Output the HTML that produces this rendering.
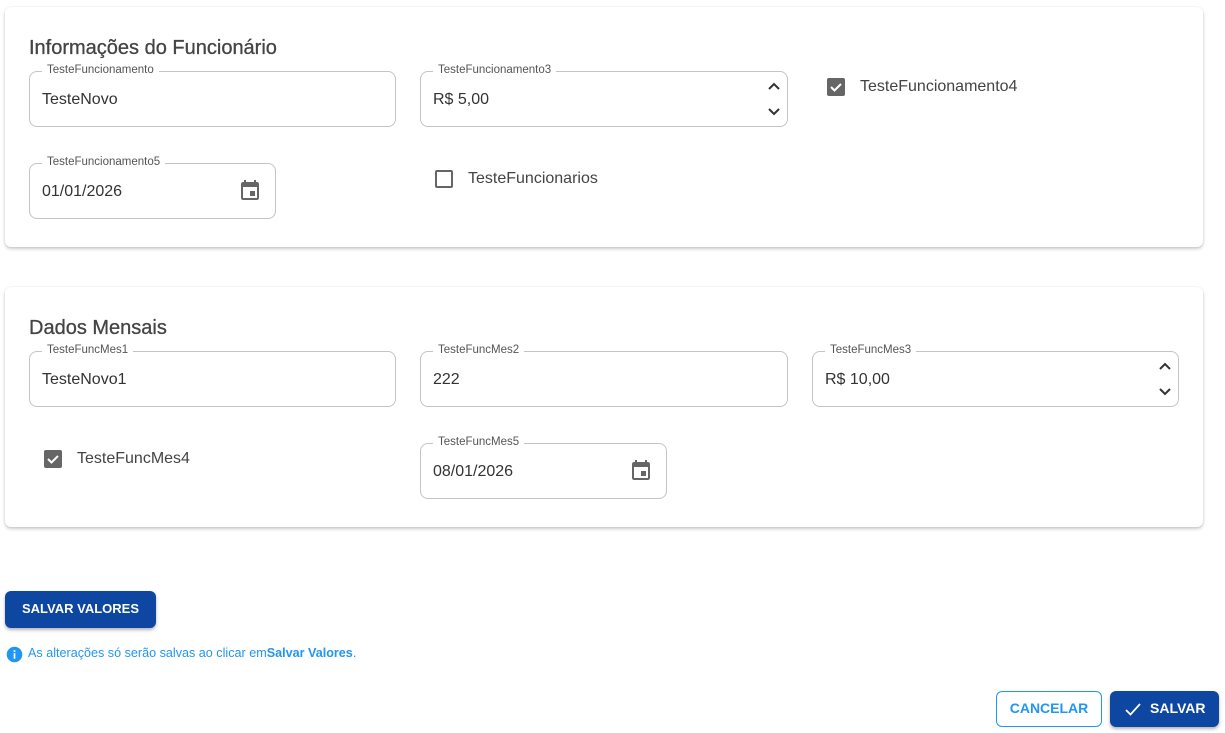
<!DOCTYPE html>
<html><head><meta charset="utf-8"><style>
*{box-sizing:border-box;margin:0;padding:0}
body{width:1225px;height:733px;background:#fff;font-family:"Liberation Sans",sans-serif;position:relative;overflow:hidden;color:#333}
.card{position:absolute;left:5px;width:1198px;height:240px;background:#fff;border-radius:6px;box-shadow:0 2px 3px rgba(0,0,0,.2),0 0 2px rgba(0,0,0,.08)}
.t{position:absolute;left:24px;font-size:20px;color:#444;-webkit-text-stroke:0.3px #444}
.f{position:absolute;height:56px;border:1px solid #c4c4c4;border-radius:8px}
.f .l{position:absolute;top:-8px;left:12px;background:#fff;padding:0 5px;font-size:11.5px;color:#555}
.f .v{position:absolute;left:12px;top:19px;font-size:16px;color:#333}
.cb{position:absolute;width:18px;height:18px;border-radius:2px}
.cb.on{background:#666}
.cb.off{border:2px solid #666}
.cl{position:absolute;font-size:16px;color:#444}
.cal{position:absolute;right:13px;top:15px}
</style></head><body>
<div class="card" style="top:7px">
<div class="t" style="top:30px">Informações do Funcionário</div>
<div class="f" style="left:24px;top:64px;width:367px"><span class="l">TesteFuncionamento</span><span class="v">TesteNovo</span></div>
<div class="f" style="left:415px;top:64px;width:368px"><span class="l">TesteFuncionamento3</span><span class="v">R$ 5,00</span>
<svg style="position:absolute;right:6px;top:7px" width="14" height="40" viewBox="0 0 14 40"><path d="M2 10l5-5 5 5M2 30l5 5 5-5" stroke="#333" stroke-width="2" fill="none"/></svg></div>
<div class="cb on" style="left:822px;top:71px"><svg width="18" height="18"><path d="M4 9l3.5 3.5L14 6" stroke="#fff" stroke-width="2" fill="none"/></svg></div>
<div class="cl" style="left:855px;top:71px">TesteFuncionamento4</div>
<div class="f" style="left:24px;top:156px;width:247px"><span class="l">TesteFuncionamento5</span><span class="v">01/01/2026</span>
<svg class="cal" width="24" height="24" viewBox="0 0 24 24"><path fill="#666" d="M17 12h-5v5h5v-5zM16 1v2H8V1H6v2H5c-1.1 0-2 .9-2 2v14c0 1.1.9 2 2 2h14c1.1 0 2-.9 2-2V5c0-1.1-.9-2-2-2h-1V1h-2zm3 18H5V8h14v11z"/></svg></div>
<div class="cb off" style="left:430px;top:163px"></div>
<div class="cl" style="left:463px;top:163px">TesteFuncionarios</div>
</div>
<div class="card" style="top:287px">
<div class="t" style="top:30px">Dados Mensais</div>
<div class="f" style="left:24px;top:64px;width:367px"><span class="l">TesteFuncMes1</span><span class="v">TesteNovo1</span></div>
<div class="f" style="left:415px;top:64px;width:368px"><span class="l">TesteFuncMes2</span><span class="v">222</span></div>
<div class="f" style="left:807px;top:64px;width:367px"><span class="l">TesteFuncMes3</span><span class="v">R$ 10,00</span>
<svg style="position:absolute;right:6px;top:7px" width="14" height="40" viewBox="0 0 14 40"><path d="M2 10l5-5 5 5M2 30l5 5 5-5" stroke="#333" stroke-width="2" fill="none"/></svg></div>
<div class="cb on" style="left:39px;top:163px"><svg width="18" height="18"><path d="M4 9l3.5 3.5L14 6" stroke="#fff" stroke-width="2" fill="none"/></svg></div>
<div class="cl" style="left:72px;top:163px">TesteFuncMes4</div>
<div class="f" style="left:415px;top:156px;width:247px"><span class="l">TesteFuncMes5</span><span class="v">08/01/2026</span>
<svg class="cal" width="24" height="24" viewBox="0 0 24 24"><path fill="#666" d="M17 12h-5v5h5v-5zM16 1v2H8V1H6v2H5c-1.1 0-2 .9-2 2v14c0 1.1.9 2 2 2h14c1.1 0 2-.9 2-2V5c0-1.1-.9-2-2-2h-1V1h-2zm3 18H5V8h14v11z"/></svg></div>
</div>
<div style="position:absolute;left:5px;top:591px;width:151px;height:37px;background:#0d47a1;border-radius:6px;box-shadow:0 2px 3px rgba(0,0,0,.3);color:#fff;font-weight:bold;font-size:13px;line-height:35px;text-align:center">SALVAR VALORES</div>
<svg style="position:absolute;left:6px;top:646px" width="17" height="17" viewBox="0 0 24 24"><circle cx="12" cy="12" r="11" fill="#2196f3"/><rect x="10.8" y="10" width="2.4" height="8" fill="#fff"/><rect x="10.8" y="6" width="2.4" height="2.4" fill="#fff"/></svg>
<div style="position:absolute;left:28px;top:646px;font-size:12.6px;color:#2196f3">As alterações só serão salvas ao clicar em<b>Salvar Valores</b>.</div>
<div style="position:absolute;left:996px;top:691px;width:106px;height:36px;border:1px solid #2196f3;border-radius:6px;color:#2196f3;font-weight:bold;font-size:14px;line-height:32px;text-align:center">CANCELAR</div>
<div style="position:absolute;left:1110px;top:691px;width:109px;height:36px;background:#0d47a1;border-radius:6px;box-shadow:0 2px 3px rgba(0,0,0,.3);color:#fff;font-weight:bold;font-size:14px;line-height:34px;padding-left:40px">SALVAR
<svg style="position:absolute;left:14px;top:10px" width="18" height="16" viewBox="0 0 18 16"><path d="M2 9l4.5 4.5L16 3" stroke="#fff" stroke-width="1.8" fill="none"/></svg></div>
</body></html>
